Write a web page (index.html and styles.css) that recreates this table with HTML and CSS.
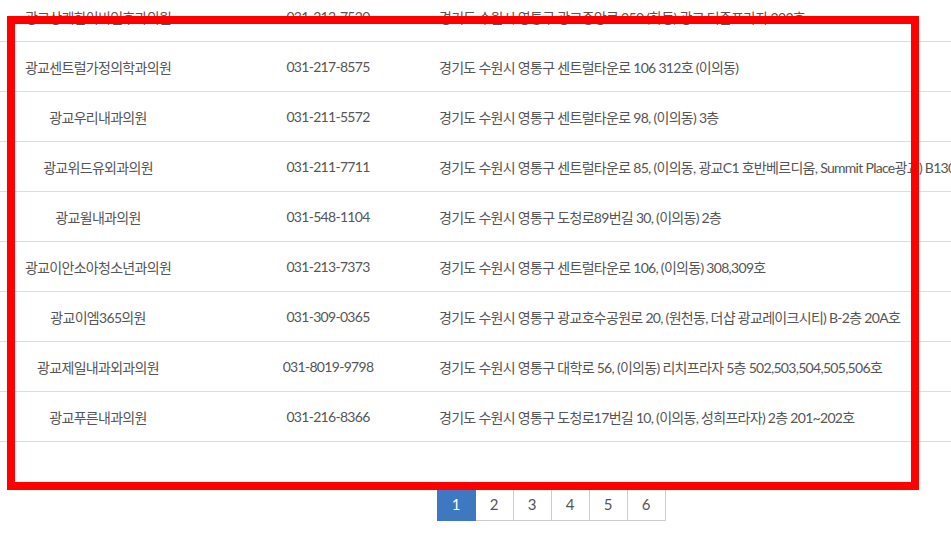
FILE: index.html
```html
<!DOCTYPE html>
<html lang="ko">
<head>
<meta charset="utf-8">
<title>의원 목록</title>
<link rel="stylesheet" href="styles.css">
</head>
<body>
<div class="page">
  <div class="list">
    <div class="row"><div class="name">광교상쾌한이비인후과의원</div><div class="tel">031-212-7520</div><div class="addr">경기도 수원시 영통구 광교중앙로 250 (하동) 광교 더즌프라자 202호</div></div>
    <div class="row"><div class="name">광교센트럴가정의학과의원</div><div class="tel">031-217-8575</div><div class="addr">경기도 수원시 영통구 센트럴타운로 106 312호 (이의동)</div></div>
    <div class="row"><div class="name">광교우리내과의원</div><div class="tel">031-211-5572</div><div class="addr">경기도 수원시 영통구 센트럴타운로 98, (이의동) 3층</div></div>
    <div class="row"><div class="name">광교위드유외과의원</div><div class="tel">031-211-7711</div><div class="addr">경기도 수원시 영통구 센트럴타운로 85, (이의동, 광교C1 호반베르디움, Summit Place광교) B130~131호</div></div>
    <div class="row"><div class="name">광교윌내과의원</div><div class="tel">031-548-1104</div><div class="addr">경기도 수원시 영통구 도청로89번길 30, (이의동) 2층</div></div>
    <div class="row"><div class="name">광교이안소아청소년과의원</div><div class="tel">031-213-7373</div><div class="addr">경기도 수원시 영통구 센트럴타운로 106, (이의동) 308,309호</div></div>
    <div class="row"><div class="name">광교이엠365의원</div><div class="tel">031-309-0365</div><div class="addr">경기도 수원시 영통구 광교호수공원로 20, (원천동, 더샵 광교레이크시티) B-2층 20A호</div></div>
    <div class="row"><div class="name">광교제일내과외과의원</div><div class="tel">031-8019-9798</div><div class="addr">경기도 수원시 영통구 대학로 56, (이의동) 리치프라자 5층 502,503,504,505,506호</div></div>
    <div class="row"><div class="name">광교푸른내과의원</div><div class="tel">031-216-8366</div><div class="addr">경기도 수원시 영통구 도청로17번길 10, (이의동, 성희프라자) 2층 201~202호</div></div>
  </div>
  <nav class="pagination">
    <a class="page-link active">1</a>
    <a class="page-link">2</a>
    <a class="page-link">3</a>
    <a class="page-link">4</a>
    <a class="page-link">5</a>
    <a class="page-link">6</a>
  </nav>
</div>
<div class="highlight"></div>
</body>
</html>
```
FILE: styles.css
```css
html, body {
  margin: 0;
  padding: 0;
  background: #fff;
  overflow: hidden;
}
body {
  font-family: Lato, "Noto Sans CJK KR", sans-serif;
  font-feature-settings: "palt";
  font-size: 14px;
  letter-spacing: -0.7px;
  color: #555;
}
.page {
  width: 1102px;
}
.list {
  margin-top: -8px;
}
.row {
  display: grid;
  grid-template-columns: 196px 224px 1fr;
  align-items: center;
  height: 50px;
  box-sizing: border-box;
  border-bottom: 1px solid #ddd;
}
.name {
  text-align: center;
  white-space: nowrap;
}
.tel {
  text-align: center;
  padding-left: 40px;
  white-space: nowrap;
}
.addr {
  padding-left: 19px;
  white-space: nowrap;
}
.pagination {
  display: flex;
  justify-content: center;
  margin-top: 45px;
}
.page-link {
  display: flex;
  align-items: center;
  justify-content: center;
  width: 39px;
  height: 34px;
  box-sizing: border-box;
  border: 1px solid #ccc;
  margin-left: -1px;
  font-size: 15px;
  letter-spacing: 0;
  color: #555;
  background: #fff;
}
.page-link:first-child {
  margin-left: 0;
}
.page-link.active {
  background: #3d78c1;
  border-color: #3d78c1;
  color: #fff;
  position: relative;
}
.highlight {
  position: absolute;
  left: 7px;
  top: 16px;
  width: 912px;
  height: 474px;
  box-sizing: border-box;
  border: 8px solid #ff0000;
}
```
